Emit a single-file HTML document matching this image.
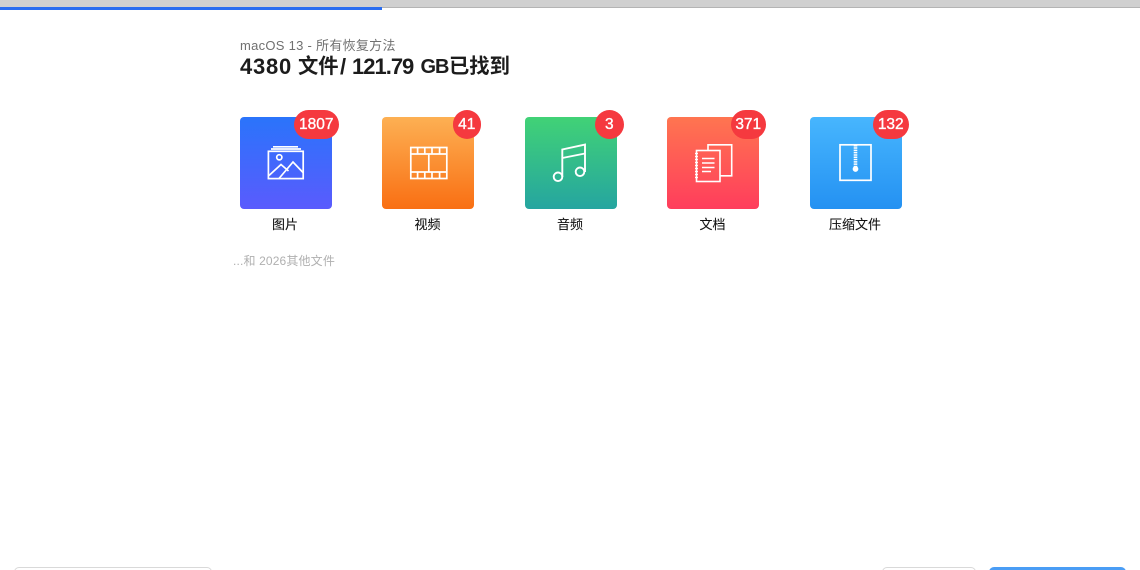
<!DOCTYPE html>
<html lang="zh">
<head>
<meta charset="utf-8">
<title>macOS 13</title>
<style>
html,body{margin:0;padding:0;background:#fff;width:1140px;height:570px;overflow:hidden}
#root{position:relative;width:1140px;height:570px;overflow:hidden;font-family:"Liberation Sans","Noto Sans CJK SC",sans-serif}
.a{position:absolute}
.topbar{left:0;top:0;width:1140px;height:7px;background:#d0d0d0;border-bottom:1px solid #b4b4b4}
.prog{left:0;top:7px;width:382px;height:3.4px;background:#2a6df0}
.t{filter:blur(.3px);white-space:nowrap}
.sub{left:240px;top:38px;font-size:13px;line-height:16px;color:#707070;letter-spacing:.28px}
.h{top:53px;font-size:22px;line-height:28px;font-weight:700;color:#1c1c1c}
.cj{font-size:20.3px}
.tile{top:117px;width:91.7px;height:91.7px;border-radius:4px}
.badge{top:110px;height:28.5px;border-radius:15px;background:#f5393f;color:#fff;font-size:15.5px;line-height:29px;text-align:center;filter:blur(.3px);-webkit-text-stroke:.35px #fff}
.lb{top:216px;width:120px;text-align:center;font-size:13px;line-height:17px;color:#111;-webkit-text-stroke:.1px #111}
.more{left:233px;top:253px;font-size:12px;line-height:16px;color:#b0b0b0;letter-spacing:.15px}
.btn{top:567px;height:10px;box-sizing:border-box;border:1px solid #d9d9d9;border-radius:5px;background:#fff}
svg{position:absolute;left:0;top:0;filter:blur(.3px)}
svg *{fill:none;stroke:#fff;stroke-opacity:1}
</style>
</head>
<body>
<div id="root">
<div class="a topbar"></div>
<div class="a prog"></div>

<div class="a t sub">macOS 13 - 所有恢复方法</div>
<div class="a t h" style="left:240px;letter-spacing:.75px">4380</div>
<div class="a t h cj" style="left:298px">文件</div>
<div class="a t h" style="left:340px">/</div>
<div class="a t h" style="left:352px;letter-spacing:-1px">121.79</div>
<div class="a t h" style="left:420.5px;font-size:20px;letter-spacing:-1px">GB</div>
<div class="a t h cj" style="left:449px">已找到</div>

<div class="a tile" style="left:240px;background:linear-gradient(#2a74fb,#5a5bfd)"></div>
<div class="a tile" style="left:382px;background:linear-gradient(#fdb053,#f96f13)"></div>
<div class="a tile" style="left:525px;background:linear-gradient(#41d276,#25a5a0)"></div>
<div class="a tile" style="left:667px;background:linear-gradient(#ff7550,#ff3d5c)"></div>
<div class="a tile" style="left:810px;background:linear-gradient(#47b6fe,#2491f2)"></div>

<svg width="1140" height="570" viewBox="0 0 1140 570">
  <!-- picture -->
  <g stroke-width="1.7">
    <rect x="268.4" y="151.3" width="34.8" height="27.3"/>
    <path d="M271 149H301" stroke-opacity=".55"/>
    <path d="M273 146.8H298" stroke-opacity=".35"/>
    <circle cx="279.3" cy="157.3" r="2.6"/>
    <path d="M269 175.5L281 164.5L288.5 171"/>
    <path d="M279 178.5L293 162L303 172.5"/>
  </g>
  <!-- film -->
  <g stroke-width="1.7">
    <rect x="410.8" y="147.5" width="36" height="31"/>
    <path d="M410.8 154H446.8M410.8 172H446.8M428.8 154V172"/>
    <path d="M417.6 147.5V154M424.8 147.5V154M432 147.5V154M439.6 147.5V154M417.6 172V178.5M424.8 172V178.5M432 172V178.5M439.6 172V178.5"/>
  </g>
  <!-- music -->
  <g stroke-width="1.9">
    <circle cx="558" cy="176.8" r="4.3"/>
    <circle cx="580" cy="171.8" r="4.3"/>
    <path d="M562.3 177V149.5L585 144.6V172"/>
    <path d="M562.3 158L585 153.5"/>
  </g>
  <!-- documents -->
  <g stroke-width="1.6">
    <path d="M708 150V144.8H731.7V175.8H720"/>
    <rect x="696.5" y="150.5" width="23.5" height="31"/>
    <path d="M695 153.5H698M695 156.5H698M695 159.5H698M695 162.5H698M695 165.5H698M695 168.5H698M695 171.5H698M695 174.5H698M695 177.5H698" stroke-width="1.2"/>
    <path d="M702 158.5H714.5M702 163H714.5M702 167.5H714.5M702 171.5H711"/>
  </g>
  <!-- zip -->
  <g stroke-width="1.7">
    <rect x="840" y="144.8" width="31" height="35.5"/>
    <path d="M855.5 145V167" stroke-width="3.6" stroke-dasharray="1.5 .8"/>
    <circle cx="855.5" cy="169" r="2" style="fill:#fff"/>
  </g>
</svg>

<div class="a badge" style="left:294px;width:44.5px">1807</div>
<div class="a badge" style="left:452.5px;width:28.5px">41</div>
<div class="a badge" style="left:595px;width:28.5px">3</div>
<div class="a badge" style="left:730.5px;width:35.5px">371</div>
<div class="a badge" style="left:872.5px;width:36.5px">132</div>

<div class="a t lb" style="left:225px">图片</div>
<div class="a t lb" style="left:367.5px">视频</div>
<div class="a t lb" style="left:510px">音频</div>
<div class="a t lb" style="left:652.5px">文档</div>
<div class="a t lb" style="left:795px">压缩文件</div>

<div class="a t more">...和 2026其他文件</div>

<div class="a btn" style="left:14px;width:198px"></div>
<div class="a btn" style="left:882px;width:94px"></div>
<div class="a btn" style="left:989px;width:137px;background:#4a9df5;border-color:#4a9df5"></div>
</div>
</body>
</html>
